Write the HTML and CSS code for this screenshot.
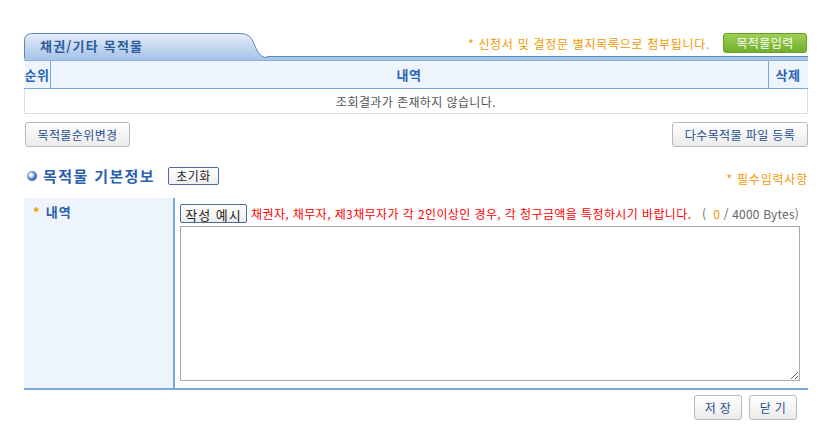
FILE: index.html
```html
<!DOCTYPE html>
<html lang="ko">
<head>
  <meta charset="UTF-8">
  <title>채권/기타 목적물</title>
  <link rel="stylesheet" href="styles.css">
</head>
<body>

<div id="wrap">
  <div class="tab-bar">
    <div class="tab">
      <svg class="tab-shape" width="243" height="25" viewBox="0 0 243 25">
        <defs>
          <linearGradient id="tabGrad" x1="0" y1="0" x2="0" y2="1">
            <stop offset="0" stop-color="#e4edf8"/>
            <stop offset="1" stop-color="#a9c5e8"/>
          </linearGradient>
        </defs>
        <path d="M0.5,25 V8 Q0.5,0.5 8,0.5 H216 C226,0.5 228,6 231,13 C234,20 237,24.5 243,24.5 V25 Z" fill="url(#tabGrad)"/>
        <path d="M0.5,25 V8 Q0.5,0.5 8,0.5 H216 C226,0.5 228,6 231,13 C234,20 237,24.5 243,24.5" fill="none" stroke="#5b87bf" stroke-width="1"/>
      </svg>
      <span class="tab-label">채권/기타 목적물</span>
    </div>
    <div class="tab-rest">
      <span class="notice">* 신청서 및 결정문 별지목록으로 첨부됩니다.</span>
      <button class="btn-green">목적물입력</button>
    </div>
  </div>
  <div class="tab-strip"></div>

  <table class="list">
    <tr class="list-head">
      <th class="col-no">순위</th>
      <th>내역</th>
      <th class="col-del">삭제</th>
    </tr>
    <tr class="list-empty">
      <td colspan="3">조회결과가 존재하지 않습니다.</td>
    </tr>
  </table>

  <div class="btn-row">
    <button class="btn">목적물순위변경</button>
    <button class="btn btn-wide">다수목적물 파일 등록</button>
  </div>

  <div class="section-head">
    <div class="section-title">
      <span class="bullet"></span>
      <h2>목적물 기본정보</h2>
      <button class="btn-small">초기화</button>
    </div>
    <span class="required">* 필수입력사항</span>
  </div>

  <div class="form">
    <div class="form-label"><span class="star">*</span> 내역</div>
    <div class="form-field">
      <div class="field-top">
        <button class="btn-example">작성 예시</button>
        <span class="warn">채권자, 채무자, 제3채무자가 각 2인이상인 경우, 각 청구금액을 특정하시기 바랍니다.</span>
        <span class="counter">(&nbsp; <b>0</b> / 4000 Bytes)</span>
      </div>
      <textarea class="memo"></textarea>
    </div>
  </div>

  <div class="footer-btns">
    <button class="btn btn-foot">저 장</button>
    <button class="btn btn-foot">닫 기</button>
  </div>
</div>

</body>
</html>
```

FILE: styles.css
```css
body {
    margin: 0;
    padding: 33px 0 0 24px;
    background: #fff;
    font-family: "Noto Sans CJK KR", "Noto Sans", sans-serif;
    font-size: 12px;
    color: #333;
    letter-spacing: 0.4px;
}

button {
    font-family: inherit;
    letter-spacing: inherit;
    white-space: nowrap;
    cursor: pointer;
}

#wrap {
    width: 784px;
}

/* tab header */
.tab-bar {
    display: flex;
    height: 24px;
}

.tab {
    position: relative;
    width: 243px;
    height: 24px;
}

.tab-shape {
    position: absolute;
    left: 0;
    top: 0;
}

.tab-label {
    position: relative;
    display: block;
    padding: 4px 0 0 16px;
    font-size: 13px;
    font-weight: bold;
    line-height: 18px;
    letter-spacing: 1.2px;
    color: #2c5c9e;
}

.tab-rest {
    flex: 1;
    display: flex;
    justify-content: flex-end;
    align-items: flex-start;
    border-bottom: 1px solid #5b87bf;
    box-sizing: border-box;
}

.notice {
    color: #f39800;
    line-height: 20px;
    margin-top: 1px;
    margin-right: 13px;
    letter-spacing: 0.7px;
}

.btn-green {
    width: 84px;
    height: 20px;
    padding: 0;
    border: 1px solid #64a021;
    border-radius: 3px;
    background: linear-gradient(#9ccf55, #72af2c);
    color: #fff;
    font-size: 12px;
    line-height: 18px;
    margin-right: 1px;
}

.tab-strip {
    height: 3px;
    background: #a9c5e8;
    border-bottom: 1px solid #8db0dc;
}

/* list table */
.list {
    width: 100%;
    border-collapse: collapse;
}

.list-head th {
    height: 27px;
    padding: 0;
    background: #eef4fc;
    color: #2a62b8;
    font-size: 13px;
    font-weight: bold;
    white-space: nowrap;
    letter-spacing: 0.5px;
    border-bottom: 1px solid #7aa6dc;
}

.list-head .col-no {
    width: 25px;
    border-right: 1px solid #7aa6dc;
}

.list-head .col-del {
    width: 39px;
    border-left: 1px solid #7aa6dc;
}

.list-empty td {
    height: 24px;
    padding: 0;
    text-align: center;
    color: #555;
    border: 1px solid #dcdcdc;
    border-top: none;
}

.btn-row {
    display: flex;
    justify-content: space-between;
    margin-top: 8px;
    padding-left: 1px;
}

.btn {
    height: 25px;
    padding: 0 10px;
    border: 1px solid #b9b9b9;
    border-radius: 3px;
    background: linear-gradient(#ffffff, #ebebeb);
    color: #1d4f91;
    font-size: 12px;
}

.btn-row .btn {
    width: 105px;
    padding: 0;
}

.btn-row .btn-wide {
    width: 136px;
}

/* section */
.section-head {
    display: flex;
    justify-content: space-between;
    align-items: flex-end;
    margin-top: 19px;
    height: 20px;
}

.section-title {
    display: flex;
    align-items: center;
}

.bullet {
    width: 10px;
    height: 10px;
    border-radius: 50%;
    background: radial-gradient(circle at 40% 40%, #ffffff 0, #e8f0fc 1.5px, #8aace0 3px, #3a68b8 5px);
    margin: 0 6px 0 3px;
}

.section-title h2 {
    margin: 0;
    font-size: 15px;
    font-weight: bold;
    color: #2a5fb0;
    line-height: 20px;
    letter-spacing: 1.4px;
}

.btn-small {
    height: 18px;
    width: 51px;
    margin-left: 13px;
    padding: 0;
    border: 1px solid #4d6b95;
    border-radius: 2px;
    background: linear-gradient(#ffffff, #eeeeee);
    color: #222;
    font-size: 12px;
    line-height: 16px;
}

.required {
    color: #f39800;
    line-height: 14px;
    letter-spacing: 0.8px;
}

/* form */
.form {
    display: flex;
    margin-top: 12px;
    border-bottom: 2px solid #7aa6dc;
    height: 190px;
}

.form-label {
    width: 151px;
    background: #eef4fc;
    border-right: 2px solid #7aa6dc;
    padding: 6px 0 0 9px;
    box-sizing: border-box;
    font-size: 13px;
    font-weight: bold;
    color: #2a5fb0;
    line-height: 16px;
    letter-spacing: 1.2px;
}

.star {
    color: #f39800;
}

.form-field {
    flex: 1;
    padding: 6px 0 0 5px;
}

.field-top {
    display: flex;
    align-items: center;
    height: 19px;
}

.btn-example {
    width: 67px;
    height: 19px;
    padding: 0;
    border: 1px solid #4d6b95;
    border-radius: 2px;
    background: linear-gradient(#ffffff, #eeeeee);
    color: #222;
    font-size: 13px;
    letter-spacing: 1px;
}

.warn {
    color: #f00;
    margin-left: 4px;
    letter-spacing: 0.4px;
    white-space: nowrap;
}

.counter {
    margin-left: auto;
    margin-right: 9px;
    color: #666;
    letter-spacing: 0.2px;
    white-space: nowrap;
}

.counter b {
    font-weight: normal;
    color: #f39800;
}

.memo {
    display: block;
    width: 620px;
    height: 155px;
    margin-top: 3px;
    border: 1px solid #a9a9a9;
    box-sizing: border-box;
    resize: both;
}

.footer-btns {
    display: flex;
    justify-content: flex-end;
    gap: 7px;
    margin-top: 5px;
    padding-right: 11px;
}

.btn-foot {
    width: 48px;
    padding: 0;
}
```
